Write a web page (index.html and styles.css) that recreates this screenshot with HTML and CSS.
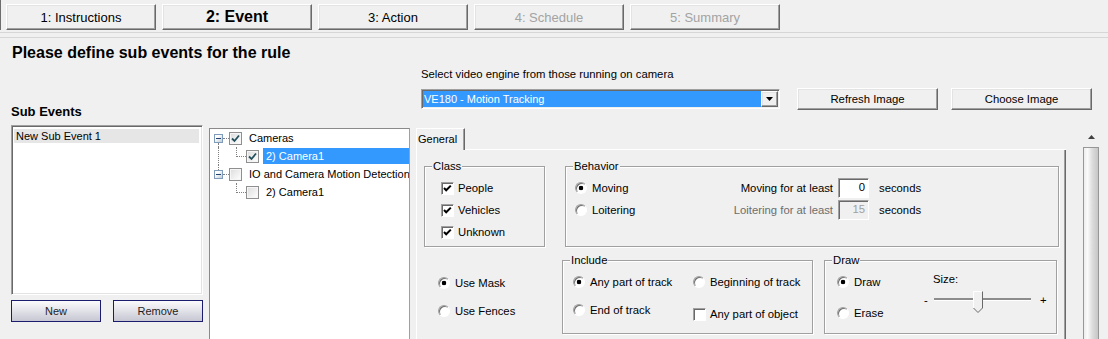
FILE: index.html
```html
<!DOCTYPE html>
<html lang="en">
<head>
  <meta charset="UTF-8">
  <meta name="viewport" content="width=device-width, initial-scale=1.0">
  <title>Rule Wizard - Event</title>
  <link rel="stylesheet" href="styles.css">
</head>
<body>
  <div class="wizard">
    <button class="step">1: Instructions</button>
    <button class="step current">2: Event</button>
    <button class="step">3: Action</button>
    <button class="step" disabled>4: Schedule</button>
    <button class="step" disabled>5: Summary</button>
  </div>
  <div class="divider"></div>

  <h1 class="page-title">Please define sub events for the rule</h1>

  <div class="workspace">
    <h2 class="section-label">Sub Events</h2>

    <div class="engine">
      <div class="engine-label">Select video engine from those running on camera</div>
      <div class="engine-row">
        <div class="combo">
          <span class="combo-value">VE180 - Motion Tracking</span>
          <span class="combo-arrow"><svg width="7" height="4" viewBox="0 0 7 4"><path d="M0 0h7L3.5 4z" fill="#000"/></svg></span>
        </div>
        <button class="btn">Refresh Image</button>
        <button class="btn">Choose Image</button>
      </div>
    </div>

    <div class="sub-events">
      <div class="listbox">
        <div class="list-item">New Sub Event 1</div>
      </div>
      <div class="list-actions">
        <button class="nav-btn">New</button>
        <button class="nav-btn">Remove</button>
      </div>
    </div>

    <!-- arbre des sources -->
    <div class="tree">
      <div class="node">
        <span class="exp"><i class="stem top off"></i><span class="exp-box"></span><i class="stem bottom"></i></span>
        <span class="link"></span>
        <span class="tcheck"><svg width="9" height="9" viewBox="0 0 9 9"><path d="M1 4.5L3.5 7L8 1.5" fill="none" stroke="#23505c" stroke-width="1.8"/></svg></span>
        <span class="node-label">Cameras</span>
      </div>
      <div class="node">
        <span class="pass"></span>
        <span class="indent"></span>
        <span class="elbow"></span>
        <span class="tcheck"><svg width="9" height="9" viewBox="0 0 9 9"><path d="M1 4.5L3.5 7L8 1.5" fill="none" stroke="#23505c" stroke-width="1.8"/></svg></span>
        <span class="node-label selected">2) Camera1</span>
      </div>
      <div class="node">
        <span class="exp"><i class="stem top"></i><span class="exp-box"></span><i class="stem bottom off"></i></span>
        <span class="link"></span>
        <span class="tcheck"></span>
        <span class="node-label">IO and Camera Motion Detection</span>
      </div>
      <div class="node">
        <span class="pass off"></span>
        <span class="indent"></span>
        <span class="elbow"></span>
        <span class="tcheck"></span>
        <span class="node-label">2) Camera1</span>
      </div>
    </div>

    <div class="editor">
      <div class="tabset">
        <div class="tabstrip">
          <span class="tab">General</span>
          <span class="tab-fill"></span>
        </div>
        <div class="tab-panel">
          <div class="panel-row">
            <fieldset class="group class-group">
              <legend>Class</legend>
              <div class="group-body class-list">
                <label class="opt"><span class="ccheck"><svg width="11" height="11" viewBox="0 0 11 11"><path d="M2 5l2.2 2.3L8.8 2.6" fill="none" stroke="#000" stroke-width="2"/></svg></span>People</label>
                <label class="opt"><span class="ccheck"><svg width="11" height="11" viewBox="0 0 11 11"><path d="M2 5l2.2 2.3L8.8 2.6" fill="none" stroke="#000" stroke-width="2"/></svg></span>Vehicles</label>
                <label class="opt"><span class="ccheck"><svg width="11" height="11" viewBox="0 0 11 11"><path d="M2 5l2.2 2.3L8.8 2.6" fill="none" stroke="#000" stroke-width="2"/></svg></span>Unknown</label>
              </div>
            </fieldset>

            <fieldset class="group behavior-group">
              <legend>Behavior</legend>
              <div class="group-body behavior-grid">
                <label class="opt"><span class="radio on"></span>Moving</label>
                <span class="prompt">Moving for at least</span>
                <span class="num">0</span>
                <span class="unit">seconds</span>
                <label class="opt"><span class="radio"></span>Loitering</label>
                <span class="prompt off">Loitering for at least</span>
                <span class="num off">15</span>
                <span class="unit">seconds</span>
              </div>
            </fieldset>
          </div>

          <div class="panel-row second">
            <div class="mask-options">
              <label class="opt"><span class="radio on"></span>Use Mask</label>
              <label class="opt"><span class="radio"></span>Use Fences</label>
            </div>

            <fieldset class="group include-group">
              <legend>Include</legend>
              <div class="group-body include-grid">
                <label class="opt"><span class="radio on"></span>Any part of track</label>
                <label class="opt"><span class="radio"></span>Beginning of track</label>
                <label class="opt"><span class="radio"></span>End of track</label>
                <label class="opt shift"><span class="ccheck"></span>Any part of object</label>
              </div>
            </fieldset>

            <fieldset class="group draw-group">
              <legend>Draw</legend>
              <div class="group-body draw-body">
                <div class="draw-modes">
                  <label class="opt"><span class="radio on"></span>Draw</label>
                  <label class="opt"><span class="radio"></span>Erase</label>
                </div>
                <div class="size">
                  <div class="size-label">Size:</div>
                  <div class="slider">
                    <span class="slider-min">-</span>
                    <svg width="99" height="25" viewBox="0 0 99 25">
                      <rect x="1" y="9" width="97" height="2" fill="#8c8c8c"/>
                      <rect x="1" y="11" width="97" height="1" fill="#fff"/>
                      <path d="M40.5 2.5H49.5V19L45 23.5L40.5 19Z" fill="#f0f0f0"/>
                      <path d="M40.5 19V2.5H49" fill="none" stroke="#fff"/>
                      <path d="M49.5 2.5V19L45 23.5L40.5 19" fill="none" stroke="#696969"/>
                    </svg>
                    <span class="slider-max">+</span>
                  </div>
                </div>
              </div>
            </fieldset>
          </div>
        </div>
      </div>

      <div class="scrollbar">
        <span class="scroll-up"><svg width="7" height="4" viewBox="0 0 7 4"><path d="M3.5 0L7 4H0z" fill="#404040"/></svg></span>
        <span class="scroll-thumb"></span>
      </div>
    </div>
  </div>
</body>
</html>
```

FILE: styles.css
```css
body {
  margin: 0;
  height: 339px;
  overflow: hidden;
  background-color: #f0f0f0;
  font-family: "Liberation Sans", Arial, sans-serif;
  font-size: 11px;
  color: #000;
}

button {
  font-family: inherit;
  color: #000;
  cursor: pointer;
}

/* boutons 3D classiques */
.step, .btn, .combo-arrow {
  background-color: #f0f0f0;
  border: 1px solid;
  border-color: #fff #696969 #696969 #fff;
  box-shadow: inset -1px -1px 0 #a0a0a0, inset 1px 1px 0 #e3e3e3;
}

.wizard {
  display: flex;
  gap: 6px;
  height: 30px;
  padding: 4px 0 0 5px;
  box-sizing: border-box;
  border-left: 1px solid #6d6d6d;
}

.step {
  width: 150px;
  height: 26px;
  padding: 0;
  font-size: 13px;
}

.step.current {
  font-size: 16px;
  font-weight: bold;
}

.step:disabled {
  color: #a3a3a3;
  cursor: default;
}

.divider {
  margin-top: 2px;
  height: 4px;
  border-top: 1px solid #d6d6d6;
  border-bottom: 1px solid #d6d6d6;
}

.page-title {
  margin: 6px 0 5px 12px;
  font-size: 16px;
  line-height: 18px;
}

.workspace {
  display: grid;
  grid-template-columns: 192px 201px 1fr;
  grid-template-rows: 53px auto;
  column-gap: 6px;
  padding-left: 11px;
}

.section-label {
  grid-column: 1;
  grid-row: 1;
  align-self: end;
  margin: 0;
  font-size: 13px;
  line-height: 16px;
}

.engine {
  grid-column: 3;
  grid-row: 1;
  padding-left: 5px;
}

.engine-label {
  font-size: 11.3px;
  line-height: 14px;
}

.engine-row {
  display: flex;
  align-items: center;
  height: 22px;
  margin-top: 7px;
}

.combo {
  display: flex;
  width: 359px;
  height: 20px;
  margin-right: 17px;
  padding: 1px;
  box-sizing: border-box;
  border: 1px solid;
  border-color: #a0a0a0 #fff #fff #a0a0a0;
  box-shadow: inset 1px 1px 0 #696969;
}

.combo-value {
  flex: 1;
  padding: 0 1px;
  background-color: #3399ff;
  color: #fff;
  line-height: 16px;
}

.combo-arrow {
  display: flex;
  align-items: center;
  justify-content: center;
  width: 17px;
  box-sizing: border-box;
}

.btn {
  width: 141px;
  height: 22px;
  padding: 0;
  font-size: 11.3px;
}

.btn + .btn {
  margin-left: 13px;
}

/* liste des sous-événements */
.sub-events {
  grid-column: 1;
  grid-row: 2;
}

.listbox {
  height: 170px;
  margin-top: 5px;
  padding: 1px;
  box-sizing: border-box;
  background-color: #fff;
  border: 1px solid;
  border-color: #a0a0a0 #fff #fff #a0a0a0;
  box-shadow: inset 1px 1px 0 #696969, inset -1px -1px 0 #e3e3e3;
}

.list-item {
  margin: 2px 2px 0 1px;
  padding-left: 2px;
  line-height: 14px;
  background-color: #e6e6e6;
}

.list-actions {
  display: flex;
  gap: 12px;
  margin-top: 5px;
}

.nav-btn {
  width: 90px;
  height: 22px;
  padding: 0;
  font-size: 11px;
  color: #1e1e1e;
  border: 1px solid #1c1c6e;
  background: linear-gradient(#fbfbfd, #c7c7d3);
}

/* arbre */
.tree {
  grid-column: 2;
  grid-row: 2;
  height: 215px;
  margin-top: 8px;
  overflow: hidden;
  background-color: #fff;
  border: 1px solid #8a8a8a;
  border-right-color: #a0a0a0;
}

.node {
  display: flex;
  align-items: center;
  height: 18px;
  padding-left: 4px;
}

.exp {
  display: flex;
  flex-direction: column;
  align-items: center;
  width: 9px;
  height: 18px;
  flex: none;
}

.stem {
  width: 0;
  border-left: 1px dotted #808080;
}

.stem.top {
  height: 5px;
}

.stem.bottom {
  height: 4px;
}

.stem.off, .pass.off {
  border-color: transparent;
}

.exp-box {
  display: flex;
  align-items: center;
  justify-content: center;
  width: 9px;
  height: 9px;
  box-sizing: border-box;
  border: 1px solid #7f9cba;
  background: linear-gradient(135deg, #fff 30%, #c2cddb);
}

.exp-box::before {
  content: "";
  width: 5px;
  height: 1px;
  background-color: #24436e;
}

.link {
  width: 6px;
  flex: none;
  border-top: 1px dotted #808080;
}

.pass {
  width: 4px;
  height: 18px;
  margin-left: 4px;
  flex: none;
  border-left: 1px dotted #808080;
}

.indent {
  width: 13px;
  flex: none;
}

.elbow {
  align-self: flex-start;
  width: 9px;
  height: 9px;
  flex: none;
  border-left: 1px dotted #808080;
  border-bottom: 1px dotted #808080;
}

.tcheck {
  display: flex;
  align-items: center;
  justify-content: center;
  width: 13px;
  height: 13px;
  flex: none;
  box-sizing: border-box;
  border: 1px solid #8f8f8f;
  background: linear-gradient(135deg, #dcdcdc, #fff);
  box-shadow: inset 0 0 0 1px #f6f6f6;
}

.node-label {
  margin-left: 4px;
  padding: 0 3px;
  line-height: 16px;
  white-space: nowrap;
}

.node-label.selected {
  flex: 1;
  background-color: #3399ff;
  color: #fff;
}

/* onglet General */
.editor {
  grid-column: 3;
  grid-row: 2;
  display: flex;
  margin-top: 8px;
}

.tabset {
  width: 650px;
  flex: none;
}

.tabstrip {
  display: flex;
  height: 22px;
}

.tab {
  height: 22px;
  box-sizing: border-box;
  padding: 0 7px 0 1px;
  line-height: 20px;
  border-top: 1px solid #fff;
  border-left: 1px solid #fff;
  border-right: 1px solid #696969;
  box-shadow: inset -1px 0 0 #a0a0a0;
}

.tab-fill {
  flex: 1;
  border-bottom: 1px solid #fff;
}

.tab-panel {
  height: 200px;
  box-sizing: border-box;
  padding: 9px 0 0 7px;
  border-left: 1px solid #fff;
  border-right: 1px solid #696969;
  box-shadow: inset -1px 0 0 #a0a0a0;
  font-size: 11.3px;
}

.panel-row {
  display: flex;
}

.panel-row.second {
  margin-top: 6px;
}

.group {
  margin: 0;
  padding: 0;
  min-width: 0;
  box-sizing: border-box;
  border: 1px solid #a0a0a0;
  box-shadow: inset 1px 1px 0 #fff, 1px 1px 0 #fff;
}

.group legend {
  margin-left: 7px;
  padding: 0 1px;
  line-height: 14px;
  background-color: #f0f0f0;
}

.opt {
  display: flex;
  align-items: center;
  height: 22px;
  white-space: nowrap;
}

.radio {
  width: 12px;
  height: 12px;
  margin-right: 5px;
  flex: none;
  box-sizing: border-box;
  border-radius: 50%;
  border: 1px solid;
  border-color: #a0a0a0 #fff #fff #a0a0a0;
  background-color: #fff;
  box-shadow: inset 1px 1px 0 #707070;
}

.radio.on {
  background: radial-gradient(circle, #000 0 2px, #fff 2.6px);
}

.ccheck {
  display: flex;
  align-items: center;
  justify-content: center;
  width: 13px;
  height: 13px;
  margin-right: 4px;
  flex: none;
  box-sizing: border-box;
  border: 1px solid;
  border-color: #a0a0a0 #fff #fff #a0a0a0;
  background-color: #fff;
  box-shadow: inset 1px 1px 0 #696969;
}

.class-group {
  width: 121px;
  height: 88px;
  margin-right: 20px;
}

.class-list {
  display: flex;
  flex-direction: column;
  padding: 4px 0 0 16px;
}

.behavior-group {
  width: 494px;
  height: 88px;
}

.behavior-grid {
  display: grid;
  grid-template-columns: 85px 173px 36px auto;
  grid-auto-rows: 22px;
  align-items: center;
  padding: 4px 0 0 9px;
}

.prompt {
  text-align: right;
  white-space: nowrap;
}

.prompt.off {
  color: #6d6d6d;
}

.num {
  width: 31px;
  height: 20px;
  margin-left: 5px;
  padding-right: 3px;
  box-sizing: border-box;
  text-align: right;
  line-height: 17px;
  background-color: #fff;
  border: 1px solid;
  border-color: #a0a0a0 #fff #fff #a0a0a0;
  box-shadow: inset 1px 1px 0 #696969;
}

.num.off {
  background-color: #f0f0f0;
  color: #a0a0a0;
}

.unit {
  margin-left: 10px;
}

.mask-options {
  display: flex;
  flex-direction: column;
  gap: 6px;
  width: 138px;
  padding: 19px 0 0 14px;
  box-sizing: border-box;
}

.include-group {
  width: 251px;
  height: 81px;
  margin-right: 11px;
}

.include-grid {
  display: grid;
  grid-template-columns: 120px auto;
  grid-auto-rows: 22px;
  row-gap: 6px;
  padding: 4px 0 0 10px;
}

.include-grid .radio {
  margin-right: 5px;
}

.opt.shift {
  margin-top: 4px;
}

.draw-group {
  width: 233px;
  height: 81px;
}

.draw-body {
  display: flex;
  padding: 4px 0 0 12px;
}

.draw-modes {
  display: flex;
  flex-direction: column;
  gap: 9px;
  width: 87px;
}

.size {
  padding-top: 1px;
}

.size-label {
  margin-left: 9px;
  line-height: 14px;
}

.slider {
  display: flex;
  align-items: center;
  margin-top: 3px;
}

.slider-min {
  width: 9px;
  margin-top: -3px;
}

.slider-max {
  margin-left: 8px;
  margin-top: -3px;
}

/* barre de défilement */
.scrollbar {
  display: flex;
  flex-direction: column;
  width: 16px;
  margin-left: 17px;
}

.scroll-up {
  display: flex;
  align-items: center;
  justify-content: center;
  height: 18px;
}

.scroll-thumb {
  height: 200px;
  margin-top: 1px;
  border: 1px solid #979797;
  background: linear-gradient(to right, #ececec, #fafafa 25%, #dcdcdc 60%, #c6c6c6);
}
```
